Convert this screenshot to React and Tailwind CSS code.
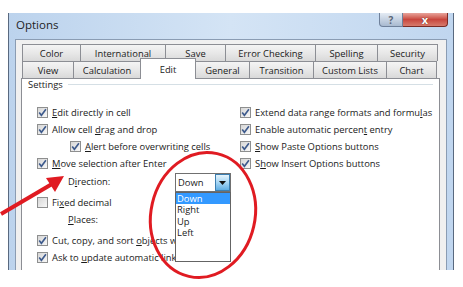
import React from "react";

const ROW1 = [
  ["Color", 59],
  ["International", 86],
  ["Save", 61],
  ["Error Checking", 91],
  ["Spelling", 63],
  ["Security", 61],
];

const ROW2 = [
  ["View", 52],
  ["Calculation", 68],
  ["Edit", 56],
  ["General", 55],
  ["Transition", 65],
  ["Custom Lists", 74],
  ["Chart", 51],
];

function Check({ checked = true }) {
  return (
    <span className="flex h-[11px] w-[11px] shrink-0 items-center justify-center border border-[#8e8f8f] bg-gradient-to-br from-[#d6d6d6] to-[#f8f8f8]">
      {checked ? (
        <svg width="9" height="9" viewBox="0 0 9 9">
          <path d="M1.2 4.4 L3.4 7.3 L7.9 1.2" fill="none" stroke="#3d5a8c" strokeWidth="1.6" />
        </svg>
      ) : null}
    </span>
  );
}

function Row({ children, checked = true, className = "" }) {
  return (
    <div className={`flex h-[17px] shrink-0 items-center gap-[4px] ${className}`}>
      <Check checked={checked} />
      <span className="whitespace-nowrap">{children}</span>
    </div>
  );
}

function Tab({ label, w, active }) {
  return (
    <div
      style={{ width: w }}
      className={`-ml-px flex shrink-0 items-center justify-center border border-b-0 border-[#8c8e94] pt-[2px] first:ml-0 ${
        active
          ? "relative z-10 -mt-[3px] -mb-px bg-white"
          : "bg-gradient-to-b from-[#f4f4f4] via-[#e8e8e8] to-[#d9d9d9]"
      }`}
    >
      {label}
    </div>
  );
}

export default function App() {
  return (
    <div className="relative h-[287px] w-[463px] overflow-hidden bg-white font-['Segoe_UI','Open_Sans',sans-serif] text-[9.4px] leading-none text-[#1b1b1b]">
      <div className="ml-[8px] mt-[13px] flex h-[257px] w-[446px] flex-col overflow-hidden border-x border-[#59697f] bg-gradient-to-r from-[#bcd3ed] via-[#d4e4f5] to-[#c0d6ef]">
        {/* title bar */}
        <div className="flex h-[26px] shrink-0 items-start justify-between">
          <span className="ml-[7px] mt-[6px] text-[11.5px] text-[#1e1e1e]">Options</span>
          <div className="mr-[5px] flex">
            <div className="flex h-[14px] w-[24px] items-center justify-center rounded-bl-[4px] border border-t-0 border-[#6f819b] bg-gradient-to-b from-[#e4ebf4] to-[#a9bad0] text-[10px] font-bold text-[#5a6577]">
              ?
            </div>
            <div className="flex h-[14px] w-[45px] items-center justify-center rounded-br-[4px] border border-l-0 border-t-0 border-[#7a2b25] bg-gradient-to-b from-[#e7a39b] via-[#c8463e] to-[#d77a6c] text-[11px] font-bold text-white [text-shadow:0_0_1px_#3a0d0a]">
              x
            </div>
          </div>
        </div>

        {/* client area */}
        <div className="mx-[6px] flex min-h-0 flex-1 flex-col border border-b-0 border-[#8a9cb3] bg-[#f0f0f0] pl-[5px] pr-[6px] pt-[4px]">
          <div className="shrink-0 pl-px">
            <div className="flex h-[17px]">
              {ROW1.map(([l, w]) => (
                <Tab key={l} label={l} w={w} />
              ))}
            </div>
            <div className="flex h-[17px]">
              {ROW2.map(([l, w]) => (
                <Tab key={l} label={l} w={w} active={l === "Edit"} />
              ))}
            </div>
          </div>

          <div className="flex min-h-0 flex-1 flex-col border border-b-0 border-[#8c8e94] bg-white">
            <div className="flex h-[11px] shrink-0 items-center pl-[6px] pr-[6px]">
              <span>Settings</span>
              <span className="ml-[5px] h-px flex-1 bg-[#d5dfe5]" />
            </div>

            <div className="mt-[14px] flex pl-[15px]">
              <div className="w-[203px] shrink-0">
                <Row>
                  <u>E</u>dit directly in cell
                </Row>
                <Row>
                  Allow cell <u>d</u>rag and drop
                </Row>
                <Row className="pl-[33px]">
                  <u>A</u>lert before overwriting cells
                </Row>
                <Row>
                  <u>M</u>ove selection after Enter
                </Row>

                <div className="mt-px flex h-[19px] items-start pl-[31px]">
                  <span className="mt-[4px] w-[107px] shrink-0">
                    D<u>i</u>rection:
                  </span>
                  <div className="relative z-20 h-[19px] w-[56px] shrink-0">
                    <div className="flex h-full border border-[#707070] bg-white">
                      <span className="flex flex-1 items-center pl-[2px]">Down</span>
                      <span className="flex w-[15px] items-center justify-center border border-[#3c7fb1] bg-gradient-to-b from-[#e5f4fc] via-[#a6d6f4] to-[#5faee3]">
                        <svg width="7" height="4" viewBox="0 0 7 4">
                          <path d="M0 0 H7 L3.5 4 Z" fill="#111" />
                        </svg>
                      </span>
                    </div>
                    <div className="absolute left-0 top-full flex h-[70px] w-[56px] flex-col border border-[#646464] bg-white">
                      <span className="flex h-[11px] items-center bg-[#3399ff] pl-[1px] text-white">Down</span>
                      <span className="flex h-[11.5px] items-center pl-[1px]">Right</span>
                      <span className="flex h-[11.5px] items-center pl-[1px]">Up</span>
                      <span className="flex h-[11.5px] items-center pl-[1px]">Left</span>
                    </div>
                  </div>
                </div>

                <Row checked={false} className="mt-[2px]">
                  Fi<u>x</u>ed decimal
                </Row>
                <div className="flex h-[17px] items-center pl-[31px]">
                  <u>P</u>laces:
                </div>
                <Row className="mt-[4px]">
                  Cut, copy, and sort <u>o</u>bjects with cells
                </Row>
                <Row>
                  Ask to <u>u</u>pdate automatic links
                </Row>
                <Row className="mt-px">Provide feedback with animation</Row>
              </div>

              <div>
                <Row>
                  Extend data range formats and formu<u>l</u>as
                </Row>
                <Row>
                  Enable automatic percen<u>t</u> entry
                </Row>
                <Row>
                  <u>S</u>how Paste Options buttons
                </Row>
                <Row>
                  S<u>h</u>ow Insert Options buttons
                </Row>
              </div>
            </div>
          </div>
        </div>
      </div>

      <svg className="pointer-events-none absolute inset-0" width="463" height="287" viewBox="0 0 463 287">
        <ellipse cx="203" cy="215" rx="52" ry="63" transform="rotate(13 203 215)" fill="none" stroke="#e01b22" strokeWidth="3" />
        <line x1="1" y1="214" x2="52" y2="184" stroke="#e01b22" strokeWidth="4" />
        <path d="M64 176 L55 192 L46 178 Z" fill="#e01b22" />
      </svg>
    </div>
  );
}
